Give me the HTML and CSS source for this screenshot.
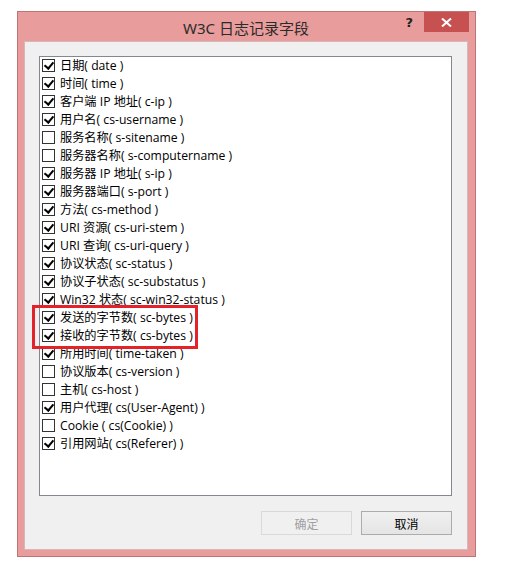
FILE: index.html
```html
<!DOCTYPE html>
<html lang="zh-CN">
<head>
  <meta charset="UTF-8" />
  <title>W3C 日志记录字段</title>
  <link rel="stylesheet" href="styles.css">
</head>
<body>

<div class="dialog">
  <div class="titlebar">
    <span class="title">W3C 日志记录字段</span>
    <span class="btn-help">?</span>
    <span class="btn-close">
      <svg width="11" height="9" viewBox="0 0 11 9"><path d="M1 0.5 L10 8.5 M10 0.5 L1 8.5" stroke="#fff" stroke-width="2"/></svg>
    </span>
  </div>

  <div class="client">
    <div class="field-list">
      <div class="rows">
        <label class="row"><span class="cb on"></span>日期( date )</label>
        <label class="row"><span class="cb on"></span>时间( time )</label>
        <label class="row"><span class="cb on"></span>客户端 IP 地址( c-ip )</label>
        <label class="row"><span class="cb on"></span>用户名( cs-username )</label>
        <label class="row"><span class="cb"></span>服务名称( s-sitename )</label>
        <label class="row"><span class="cb"></span>服务器名称( s-computername )</label>
        <label class="row"><span class="cb on"></span>服务器 IP 地址( s-ip )</label>
        <label class="row"><span class="cb on"></span>服务器端口( s-port )</label>
        <label class="row"><span class="cb on"></span>方法( cs-method )</label>
        <label class="row"><span class="cb on"></span>URI 资源( cs-uri-stem )</label>
        <label class="row"><span class="cb on"></span>URI 查询( cs-uri-query )</label>
        <label class="row"><span class="cb on"></span>协议状态( sc-status )</label>
        <label class="row"><span class="cb on"></span>协议子状态( sc-substatus )</label>
        <label class="row"><span class="cb on"></span>Win32 状态( sc-win32-status )</label>
        <label class="row"><span class="cb on"></span>发送的字节数( sc-bytes )</label>
        <label class="row"><span class="cb on"></span>接收的字节数( cs-bytes )</label>
        <label class="row"><span class="cb on"></span>所用时间( time-taken )</label>
        <label class="row"><span class="cb"></span>协议版本( cs-version )</label>
        <label class="row"><span class="cb"></span>主机( cs-host )</label>
        <label class="row"><span class="cb on"></span>用户代理( cs(User-Agent) )</label>
        <label class="row"><span class="cb"></span>Cookie ( cs(Cookie) )</label>
        <label class="row"><span class="cb on"></span>引用网站( cs(Referer) )</label>
      </div>
    </div>

    <div class="buttons">
      <button class="btn btn-disabled">确定</button>
      <button class="btn">取消</button>
    </div>
  </div>
</div>

<div class="highlight"></div>

</body>
</html>
```

FILE: styles.css
```css
* { box-sizing: border-box; margin: 0; padding: 0; }
body {
  font-family: "Open Sans", "Noto Sans CJK SC", sans-serif;
  font-size: 12px;
  background: #fff;
  color: #000;
}

.dialog {
  margin: 11px 0 0 17px;
  width: 459px;
  height: 546px;
  background: #e89c9b;
  border: 1px solid #bc7574;
  padding: 0 7px 6px 6px;
  display: flex;
  flex-direction: column;
}

.titlebar {
  height: 29px;
  position: relative;
  display: flex;
  align-items: center;
  justify-content: center;
}
.title {
  font-family: "Noto Sans", "Noto Sans CJK SC", sans-serif;
  font-size: 15px;
  color: #2b2b2b;
  margin-top: 1px;
}
.btn-help {
  position: absolute;
  right: 55px;
  top: 3px;
  font-family: "DejaVu Sans", sans-serif;
  font-weight: bold;
  font-size: 13px;
  color: #222;
}
.btn-close {
  position: absolute;
  right: -1px;
  top: 0;
  width: 45px;
  height: 20px;
  background: #c75050;
  display: flex;
  align-items: center;
  justify-content: center;
}

.client {
  flex: 1;
  background: #f0f0f0;
  border: 1px solid #d6b8b8;
  padding: 14px 15px 0 14px;
}

.field-list {
  height: 440px;
  background: #fff;
  border: 1px solid #828790;
  padding: 0 0 0 2px;
  font-size: 12.2px;
  overflow: hidden;
}
.rows {
  margin-top: -1px;
}
.row {
  display: flex;
  align-items: center;
  height: 18px;
  white-space: nowrap;
}
.cb {
  width: 13px;
  height: 13px;
  border: 1px solid #333;
  background: #fff;
  margin-right: 5px;
  flex: none;
  position: relative;
}
.cb.on::after {
  content: "";
  position: absolute;
  left: 3px;
  top: 0;
  width: 4px;
  height: 7px;
  border-right: 2px solid #000;
  border-bottom: 2px solid #000;
  transform: rotate(40deg);
}

.buttons {
  display: flex;
  justify-content: flex-end;
  gap: 9px;
  margin-top: 15px;
}
.btn {
  width: 91px;
  height: 24px;
  font-family: "Noto Sans CJK SC", sans-serif;
  font-size: 12px;
  background: linear-gradient(#f0f0f0, #e5e5e5);
  border: 1px solid #acacac;
  color: #000;
}
.btn-disabled {
  background: #f0f0f0;
  border-color: #d9d9d9;
  color: #a0a0a0;
}

.highlight {
  position: absolute;
  left: 32px;
  top: 305px;
  width: 166px;
  height: 44px;
  border: 3px solid #e3222a;
}
```
